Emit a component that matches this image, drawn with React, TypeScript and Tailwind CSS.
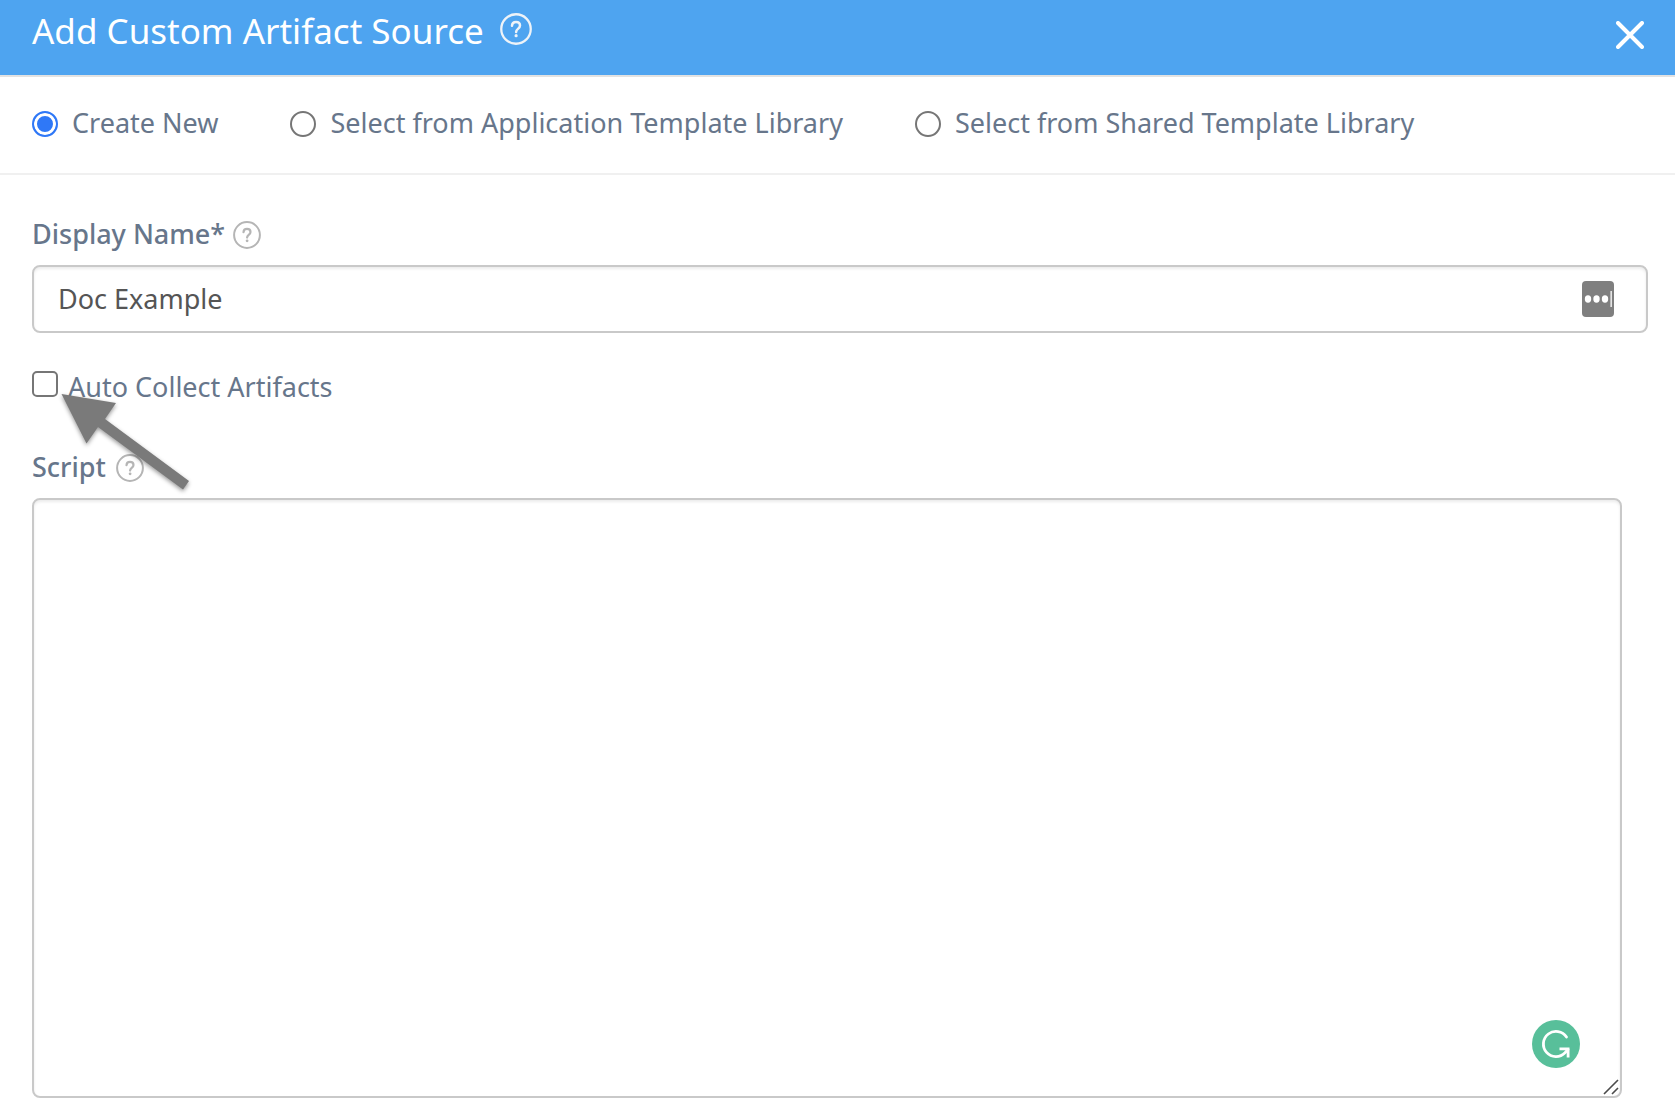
import { useState } from "react";

const SOURCES = [
  "Create New",
  "Select from Application Template Library",
  "Select from Shared Template Library",
];

function HelpIcon({ className }: { className: string }) {
  return (
    <svg viewBox="0 0 28 28" fill="none" stroke="currentColor" aria-hidden="true" className={className}>
      <circle cx="14" cy="14" r="12.9" strokeWidth="2" />
      <path
        d="M10.5 11.2c.1-2.1 1.5-3.4 3.5-3.4s3.5 1.2 3.5 3.1c0 1.5-.8 2.2-1.8 3-1.1.9-1.6 1.5-1.6 2.7"
        strokeWidth="2.2"
        strokeLinecap="round"
      />
      <circle cx="14.1" cy="19.8" r="1.4" fill="currentColor" stroke="none" />
    </svg>
  );
}

function PointerArrow() {
  return (
    <svg
      viewBox="0 0 136 106"
      fill="#7a7a7a"
      aria-hidden="true"
      className="pointer-events-none absolute top-5 left-7 h-[106px] w-[136px] drop-shadow-[0_2px_2px_rgba(0,0,0,0.4)]"
    >
      <path d="M1.500 5 56 14 45 30 129 92 123 100.500 38 38 26.500 54.500Z" />
    </svg>
  );
}

function GrammarBadge() {
  return (
    <button
      type="button"
      aria-label="Check writing"
      className="absolute right-[42px] bottom-[30px] size-12 rounded-full bg-[#58bf9a]"
    >
      <svg viewBox="0 0 48 48" fill="none" stroke="#fff" strokeWidth="2.8" aria-hidden="true">
        <path d="M34.5 17A12.6 12.6 0 1 0 33 32.8L36 29.500" strokeLinecap="round" />
        <path d="M27.500 28.900h8.600V37.500" />
      </svg>
    </button>
  );
}

export default function App() {
  const [source, setSource] = useState(SOURCES[0]);
  return (
    <div className="min-h-screen bg-white font-['Noto_Sans',sans-serif] text-[27px] leading-9 text-[#67768b]">
      <header className="flex h-[77px] items-start justify-between border-b-2 border-[#e2e2e2] bg-[#4ea4f0] pr-[27px] pl-8 text-white">
        <div className="flex gap-4">
          <h1 className="pt-[7px] text-[35px] leading-12">Add Custom Artifact Source</h1>
          <button type="button" aria-label="Help" className="mt-[13px] size-8 text-[#eef3f8]">
            <HelpIcon className="size-8" />
          </button>
        </div>
        <button type="button" aria-label="Close" className="mt-[17px] p-1">
          <svg viewBox="0 0 28 28" stroke="currentColor" strokeWidth="4" strokeLinecap="round" className="size-7" aria-hidden="true">
            <path d="M2 2 26 26M26 2 2 26" />
          </svg>
        </button>
      </header>

      <fieldset className="flex h-[98px] items-start gap-[72px] border-b-2 border-[#f0f0f0] px-8 pt-7">
        {SOURCES.map((name) => (
          <label key={name} className="flex items-center gap-3.5 whitespace-nowrap">
            <input
              type="radio"
              name="source"
              checked={source === name}
              onChange={() => setSource(name)}
              className="mt-0.5 size-[26px] appearance-none rounded-full border-2 border-[#767676] bg-white checked:border-[#2f78f7] checked:bg-[#2f78f7] checked:shadow-[inset_0_0_0_3px_#fff]"
            />
            {name}
          </label>
        ))}
      </fieldset>

      <main className="px-8 pt-[41px]">
        <div className="mr-[-5px]">
          <div className="flex items-end gap-2">
            <label htmlFor="display-name" className="font-medium">Display Name*</label>
            <button type="button" aria-label="Display name help" className="mb-[3px] text-[#b5b5b5]">
              <HelpIcon className="size-7" />
            </button>
          </div>
          <div className="relative mt-[13px]">
            <input
              id="display-name"
              defaultValue="Doc Example"
              className="h-[68px] w-full rounded-lg border-2 border-[#c9c9c9] bg-white pr-20 pb-0.5 pl-6 text-[#555] shadow-[inset_0_2px_3px_rgba(0,0,0,0.08)] outline-none"
            />
            <button
              type="button"
              aria-label="Fill saved value"
              className="absolute top-4 right-[34px] flex h-9 w-8 items-center justify-center rounded bg-[#7f7f7f]"
            >
              <svg viewBox="0 0 32 36" fill="#fff" className="h-9 w-8" aria-hidden="true">
                <ellipse cx="6" cy="18" rx="3.2" ry="3.7" />
                <ellipse cx="14.5" cy="18" rx="3.2" ry="3.7" />
                <ellipse cx="23" cy="18" rx="3.2" ry="3.7" />
                <path d="M28.5 10h1.3v16h-1.3z" />
              </svg>
            </button>
          </div>
        </div>

        <div className="relative mt-9">
          <label className="flex items-start gap-2.5">
            <input
              type="checkbox"
              className="mt-0.5 size-[26px] appearance-none rounded-[5px] border-2 border-[#767676] bg-white checked:bg-[#2f78f7]"
            />
            <span>Auto Collect Artifacts</span>
          </label>
          <PointerArrow />
        </div>

        <div className="mt-11 flex items-end gap-2.5">
          <label htmlFor="script" className="font-medium">Script</label>
          <button type="button" aria-label="Script help" className="mb-[3px] text-[#b5b5b5]">
            <HelpIcon className="size-7" />
          </button>
        </div>
        <div className="relative mt-[13px] mr-[21px]">
          <textarea
            id="script"
            className="block h-[600px] w-full resize-none rounded-lg border-2 border-[#c9c9c9] bg-white p-6 text-[#555] shadow-[inset_0_2px_3px_rgba(0,0,0,0.08)] outline-none"
          />
          <GrammarBadge />
          <svg
            viewBox="0 0 16 16"
            stroke="#4b4b4b"
            strokeWidth="1.6"
            className="pointer-events-none absolute right-[3px] bottom-[3px] size-4"
            aria-hidden="true"
          >
            <path d="M1 15 15 1M9 15 15 9" />
          </svg>
        </div>
      </main>
    </div>
  );
}
